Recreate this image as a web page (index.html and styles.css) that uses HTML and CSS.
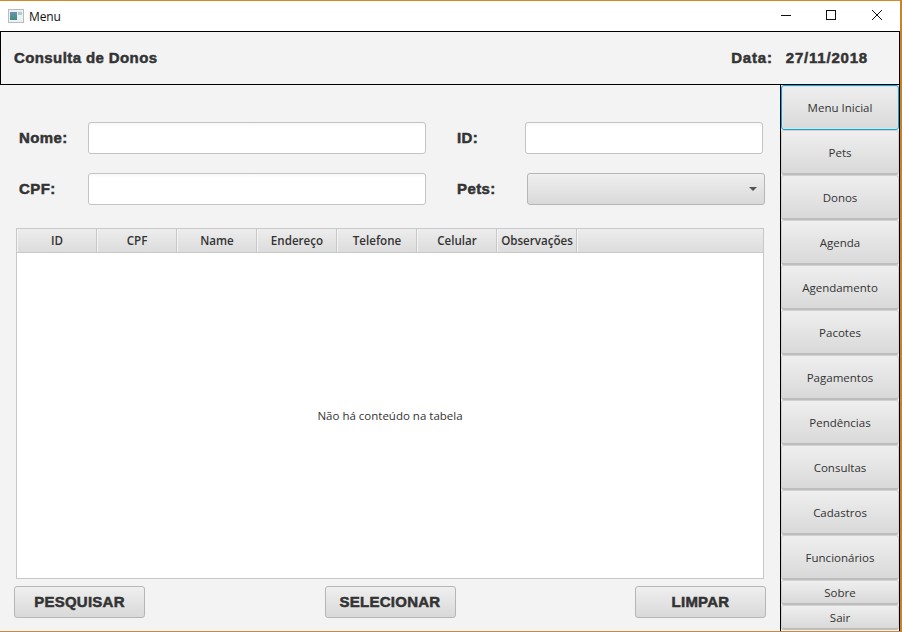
FILE: index.html
```html
<!DOCTYPE html>
<html>
<head>
  <title>Menu</title>
  <link rel="stylesheet" href="styles.css">
</head>
<body>
  <div class="window">
    <div class="title-bar">
      <svg class="app-icon" width="16" height="14" viewBox="0 0 16 14">
        <defs>
          <linearGradient id="icon-fill" x1="0" y1="0" x2="0" y2="1">
            <stop offset="0" stop-color="#6d93b4"/>
            <stop offset="1" stop-color="#3f8f7a"/>
          </linearGradient>
        </defs>
        <rect x="0.5" y="0.5" width="15" height="13" fill="#eef1f1" stroke="#b9bcbc"/>
        <rect x="2" y="3" width="7" height="8" fill="url(#icon-fill)"/>
        <rect x="10" y="3" width="4" height="3" fill="#b4cccc"/>
      </svg>
      <span class="title-text">Menu</span>
      <div class="window-controls">
        <svg width="46" height="30" viewBox="0 0 46 30"><path d="M19 14.5H29" stroke="#111" fill="none"/></svg>
        <svg width="46" height="30" viewBox="0 0 46 30"><rect x="18.5" y="9.5" width="9" height="9" stroke="#111" fill="none"/></svg>
        <svg width="46" height="30" viewBox="0 0 46 30"><path d="M18 9L28 19M28 9L18 19" stroke="#111" fill="none"/></svg>
      </div>
    </div>

    <div class="header">
      <span class="heavy header-title">Consulta de Donos</span>
      <span class="heavy date-label">Data:</span>
      <span class="heavy date-value">27/11/2018</span>
    </div>

    <div class="content">
      <div class="main">
        <div class="form-row">
          <label class="heavy label-first">Nome:</label>
          <input type="text" class="field field-wide">
          <label class="heavy label-second">ID:</label>
          <input type="text" class="field field-narrow">
        </div>
        <div class="form-row form-row-2">
          <label class="heavy label-first">CPF:</label>
          <input type="text" class="field field-wide">
          <label class="heavy label-second label-pets">Pets:</label>
          <div class="combo"><span class="combo-arrow"></span></div>
        </div>

        <div class="table">
          <div class="table-head">
            <div class="col">ID</div>
            <div class="col">CPF</div>
            <div class="col">Name</div>
            <div class="col">Endereço</div>
            <div class="col">Telefone</div>
            <div class="col">Celular</div>
            <div class="col">Observações</div>
            <div class="col-rest"></div>
          </div>
          <div class="table-empty">Não há conteúdo na tabela</div>
        </div>

        <div class="actions">
          <button class="heavy action">PESQUISAR</button>
          <button class="heavy action">SELECIONAR</button>
          <button class="heavy action">LIMPAR</button>
        </div>
      </div>

      <div class="sidebar">
        <button class="nav nav-focus">Menu Inicial</button>
        <button class="nav">Pets</button>
        <button class="nav">Donos</button>
        <button class="nav">Agenda</button>
        <button class="nav">Agendamento</button>
        <button class="nav">Pacotes</button>
        <button class="nav">Pagamentos</button>
        <button class="nav">Pendências</button>
        <button class="nav">Consultas</button>
        <button class="nav">Cadastros</button>
        <button class="nav">Funcionários</button>
        <button class="nav nav-small">Sobre</button>
        <button class="nav nav-small">Sair</button>
      </div>
    </div>
  </div>
</body>
</html>
```

FILE: styles.css
```css
html, body {
  margin: 0;
  padding: 0;
  overflow: hidden;
}

body {
  font-family: "Open Sans", "Noto Sans", sans-serif;
  font-size: 11.5px;
  color: #333;
}

.window {
  width: 902px;
  height: 632px;
  box-sizing: border-box;
  border-top: 1px solid #d58a2a;
  border-bottom: 1px solid #c58a45;
  border-right: 2px solid #c9822a;
  display: flex;
  flex-direction: column;
  background: #f3f3f3;
}

.title-bar {
  height: 30px;
  background: #fff;
  display: flex;
  align-items: center;
  padding-left: 8px;
  flex: none;
}

.title-text {
  margin-left: 5px;
  font-size: 12px;
  letter-spacing: -0.1px;
  color: #111;
}

.window-controls {
  margin-left: auto;
  display: flex;
}

.heavy {
  font-family: "Liberation Sans", Arial, sans-serif;
  font-weight: bold;
  color: #333;
  -webkit-text-stroke: 0.5px #333;
}

.header {
  height: 54px;
  box-sizing: border-box;
  border: 1px solid #000;
  display: flex;
  align-items: center;
  padding: 0 0 2px 13px;
  flex: none;
  font-size: 15px;
}

.header-title {
  letter-spacing: 0.4px;
}

.date-label {
  margin-left: auto;
  letter-spacing: 0.8px;
}

.date-value {
  margin-left: 13px;
  margin-right: 31px;
  letter-spacing: 0.8px;
}

.content {
  flex: 1;
  display: flex;
  min-height: 0;
}

.main {
  width: 780px;
  box-sizing: border-box;
  padding-top: 37px;
  flex: none;
}

.form-row {
  display: flex;
  align-items: center;
  padding-left: 19px;
  height: 32px;
  font-size: 15px;
}

.form-row-2 {
  margin-top: 19px;
}

.label-first {
  width: 69px;
  padding-bottom: 2px;
  letter-spacing: 0.4px;
}

.label-second {
  margin-left: 31px;
  width: 68px;
  padding-bottom: 2px;
  letter-spacing: 0.4px;
}

.label-pets {
  width: 70px;
}

.field {
  height: 32px;
  box-sizing: border-box;
  border: 1px solid #c4c4c4;
  border-radius: 3px;
  background: linear-gradient(#f8f8f8, #fff 4px);
  padding: 0 6px;
  outline: none;
}

.field-wide {
  width: 338px;
}

.field-narrow {
  width: 238px;
}

.combo {
  width: 238px;
  height: 32px;
  box-sizing: border-box;
  border: 1px solid #b6b6b6;
  border-radius: 3px;
  background: linear-gradient(#efefef, #d9d9d9);
  display: flex;
  align-items: center;
  justify-content: flex-end;
  padding-right: 7px;
}

.combo-arrow {
  width: 0;
  height: 0;
  border-left: 4px solid transparent;
  border-right: 4px solid transparent;
  border-top: 4px solid #555;
}

.table {
  margin: 23px 0 0 16px;
  width: 748px;
  height: 351px;
  box-sizing: border-box;
  border: 1px solid #c8c8c8;
  background: #fff;
  display: flex;
  flex-direction: column;
}

.table-head {
  height: 24px;
  box-sizing: border-box;
  border-bottom: 1px solid #c8c8c8;
  background: linear-gradient(#ededed, #dcdcdc);
  display: flex;
  flex: none;
}

.col {
  width: 80px;
  box-sizing: border-box;
  border-right: 1px solid #c8c8c8;
  border-left: 1px solid #f4f4f4;
  text-align: center;
  line-height: 24px;
  font-weight: 600;
  font-size: 11.6px;
  color: #333;
  white-space: nowrap;
}

.col-rest {
  flex: 1;
  border-left: 1px solid #f4f4f4;
}

.table-empty {
  flex: 1;
  display: flex;
  align-items: center;
  justify-content: center;
}

.actions {
  margin: 7px 14px 0 14px;
  display: flex;
  justify-content: space-between;
}

.action {
  width: 131px;
  height: 32px;
  border: 1px solid #b6b6b6;
  border-radius: 3px;
  background: linear-gradient(#efefef, #d9d9d9);
  font-size: 15px;
  letter-spacing: 0.25px;
  padding: 0 0 2px;
}

.sidebar {
  border-left: 1px solid #000;
  border-right: 1px solid #000;
  width: 120px;
  box-sizing: border-box;
  flex: none;
  display: flex;
  flex-direction: column;
}

.nav {
  height: 45px;
  flex: none;
  box-sizing: border-box;
  border: 1px solid #d2d2d2;
  border-bottom: 2px solid #bdbdbd;
  border-radius: 3px;
  background: linear-gradient(#efefef, #d9d9d9);
  font-family: "Open Sans", "Noto Sans", sans-serif;
  font-size: 11.5px;
  color: #333;
  padding: 0;
}

.nav-focus {
  border: 1px solid #16a0d8;
  box-shadow: inset 0 0 0 1px #cfeaf5;
}

.nav-small {
  height: 25px;
}
```
